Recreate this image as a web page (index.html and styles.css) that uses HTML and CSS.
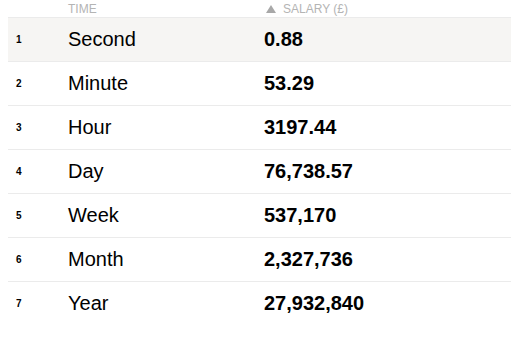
FILE: index.html
```html
<!DOCTYPE html>
<html>
<head>
<meta charset="utf-8">
<link rel="stylesheet" href="styles.css">
</head>
<body>
<div class="table">
  <div class="row head">
    <div class="c num"></div>
    <div class="c name">TIME</div>
    <div class="c val"><svg class="arrow" width="10" height="8" viewBox="0 0 10 8"><path d="M5 0 L10 8 L0 8 Z" fill="#a8a8a8"/></svg>SALARY (£)</div>
  </div>
  <div class="row hl"><div class="c num">1</div><div class="c name">Second</div><div class="c val">0.88</div></div>
  <div class="row"><div class="c num">2</div><div class="c name">Minute</div><div class="c val">53.29</div></div>
  <div class="row"><div class="c num">3</div><div class="c name">Hour</div><div class="c val">3197.44</div></div>
  <div class="row"><div class="c num">4</div><div class="c name">Day</div><div class="c val">76,738.57</div></div>
  <div class="row"><div class="c num">5</div><div class="c name">Week</div><div class="c val">537,170</div></div>
  <div class="row"><div class="c num">6</div><div class="c name">Month</div><div class="c val">2,327,736</div></div>
  <div class="row last"><div class="c num">7</div><div class="c name">Year</div><div class="c val">27,932,840</div></div>
</div>
</body>
</html>
```
FILE: styles.css
```css
html, body { margin: 0; padding: 0; background: #fff; }
body { font-family: "Liberation Sans", Arial, sans-serif; color: #000; overflow: hidden; }
.table { margin-left: 8px; width: 503px; }
.row {
  display: grid;
  grid-template-columns: 52px 196px 1fr;
  align-items: center;
  height: 43px;
  border-bottom: 1px solid #ebebeb;
}
.row.last { border-bottom: none; }
.row.hl { background: #f6f5f3; }
.c { padding-left: 8px; }
.num { font-size: 10px; font-weight: bold; }
.name { font-size: 20px; }
.val { font-size: 20px; font-weight: bold; }
.row.head { height: 17px; align-items: start; }
.head .c { font-size: 12px; color: #b4b4b4; font-weight: normal; line-height: 16px; padding-top: 1px; }
.arrow { display: inline-block; vertical-align: 0; margin-left: 2px; margin-right: 7px; }
```
